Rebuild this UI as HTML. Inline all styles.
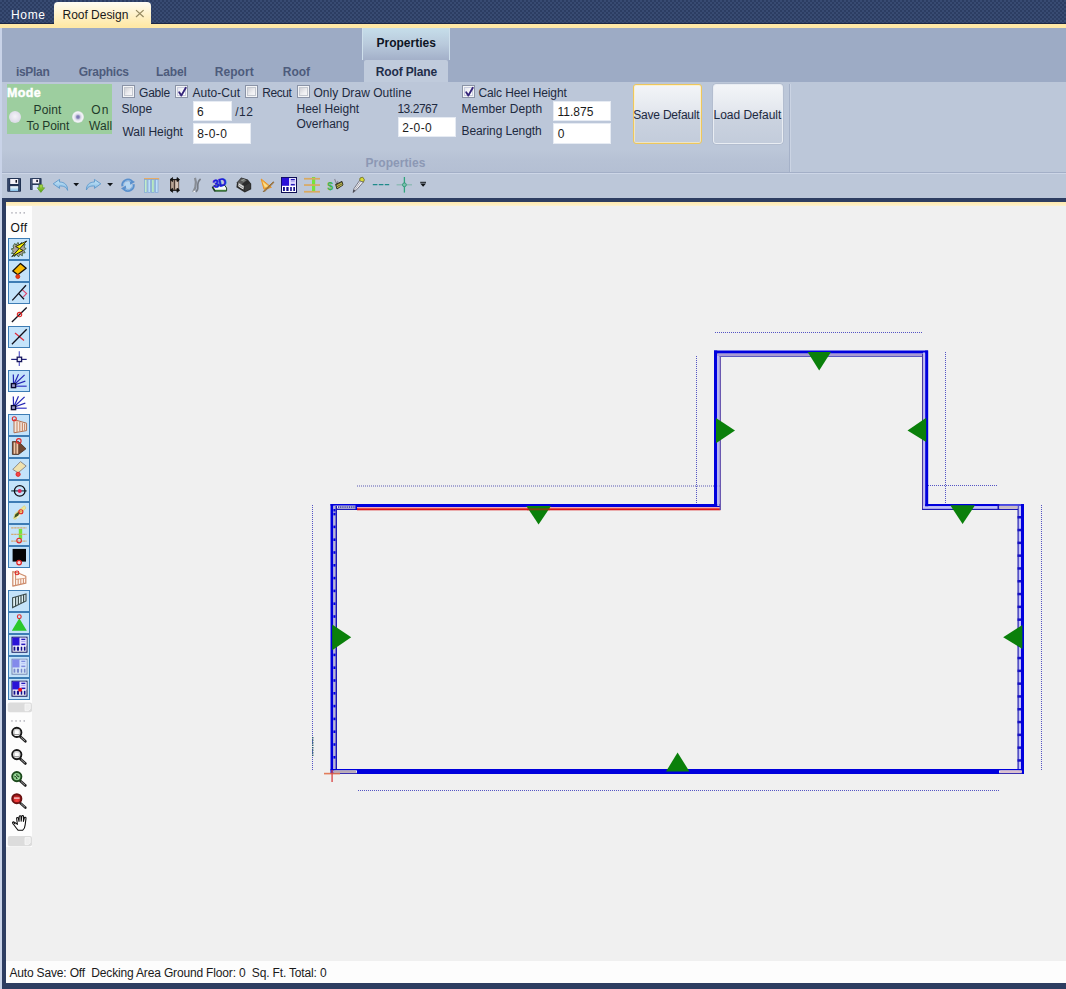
<!DOCTYPE html><html><head><meta charset="utf-8"><title>Roof Design</title><style>

*{margin:0;padding:0;box-sizing:border-box}
html,body{width:1066px;height:989px;overflow:hidden;background:#f0f0f0}
body{position:relative;font-family:"Liberation Sans",sans-serif}
.a{position:absolute}
.t{position:absolute;white-space:pre;line-height:1.149;font-family:"Liberation Sans",sans-serif}

</style></head><body>
<div class="a" style="left:0px;top:0px;width:1066px;height:24px;background:#2c3d62;background-image:radial-gradient(circle at 1px 1px,rgba(120,150,200,.16) 0.9px,transparent 1.3px),radial-gradient(circle at 3px 3px,rgba(120,150,200,.16) 0.9px,transparent 1.3px);background-size:4px 4px;border-bottom:1px solid #1d2744"></div>
<div class="a" style="left:0px;top:24px;width:1066px;height:4px;background:#ffe8a6;"></div>
<div class="a" style="left:54px;top:2px;width:97px;height:24px;background:linear-gradient(#fffdf4,#fff3cf 45%,#ffe8a6);border-radius:4px 4px 0 0"></div>
<div class="a" style="left:0px;top:28px;width:1066px;height:54px;background:#9dabc5;"></div>
<div class="a" style="left:0px;top:82px;width:1066px;height:90px;background:#bcc7d9;"></div>
<div class="a" style="left:2px;top:149px;width:787px;height:23px;background:linear-gradient(rgba(181,192,211,0),#b7c2d5 45%,#b4bfd3);"></div>
<div class="a" style="left:789px;top:84px;width:1px;height:88px;background:#a5b1c8;"></div>
<div class="a" style="left:790px;top:84px;width:1px;height:88px;background:#cbd4e4;"></div>
<div class="a" style="left:0px;top:172px;width:1066px;height:1px;background:#a3afc7;"></div>
<div class="a" style="left:0px;top:173px;width:1066px;height:1px;background:#cdd6e7;"></div>
<div class="a" style="left:0px;top:174px;width:1066px;height:24px;background:#bcc7d9;"></div>
<div class="a" style="left:0px;top:28px;width:2px;height:961px;background:#c9d3e8;"></div>
<div class="a" style="left:362px;top:28px;width:88px;height:32px;background:linear-gradient(#c6deea,#b9cadc 50%,#a3b0c9);border-left:1px solid #cfe0ec;border-right:1px solid #cfe0ec"></div>
<div class="a" style="left:364px;top:60px;width:84px;height:22px;background:#c0cbdc;border-radius:2px 2px 0 0"></div>
<div class="a" style="left:2px;top:198px;width:1064px;height:4px;background:#2d3d61;"></div>
<div class="a" style="left:2px;top:198px;width:4.2px;height:791px;background:#2d3d61;"></div>
<div class="a" style="left:2px;top:983px;width:1064px;height:6px;background:#2d3d61;"></div>
<div class="a" style="left:6.2px;top:202px;width:1059.8px;height:4px;background:linear-gradient(#ffe9ad,#fdf1cf);"></div>
<div class="a" style="left:6.2px;top:206px;width:25.8px;height:641px;background:#fdfdfd;"></div>
<div class="a" style="left:6.2px;top:961px;width:1059.8px;height:22px;background:#fdfdfd;"></div>
<div class="a" style="left:7.3px;top:83.7px;width:105px;height:50px;background:#9dce9f;"></div>
<style>
.cb{position:absolute;top:85px;width:13px;height:13px;border:1px solid #8a93a6;background:#f4f5f7;padding:1px}
.cb i{display:block;width:9px;height:9px;border:1px solid #c4c8d0;background:linear-gradient(135deg,#cfd0d6,#eeeef1 60%,#f7f7f9)}
.cb.on i{background:linear-gradient(135deg,#e4e6ee,#fbfbfd 60%,#ffffff);border-color:#c9cde0}
.cb svg{position:absolute;left:1px;top:0px}
.in{position:absolute;background:#fff;border:1px solid #e6ebf3}
.btn{position:absolute;top:84px;height:60px;border-radius:3px;background:linear-gradient(#f3f5f8,#e3e7ee 45%,#cbd3e0 55%,#c3ccdb)}
.rad{position:absolute;width:12px;height:12px;border-radius:50%}
</style>
<div class="cb" style="left:122px"><i></i></div>
<div class="cb on" style="left:175px"><i></i><svg width="11" height="12" viewBox="0 0 11 12"><path d="M2.2 6.2 L4.3 9.6 L8.8 1.8" fill="none" stroke="#35257a" stroke-width="1.9" stroke-linecap="round" stroke-linejoin="round"/></svg></div>
<div class="cb" style="left:245px"><i></i></div>
<div class="cb" style="left:297px"><i></i></div>
<div class="cb on" style="left:462px"><i></i><svg width="11" height="12" viewBox="0 0 11 12"><path d="M2.2 6.2 L4.3 9.6 L8.8 1.8" fill="none" stroke="#35257a" stroke-width="1.9" stroke-linecap="round" stroke-linejoin="round"/></svg></div>

<div class="in" style="left:193px;top:101px;width:38.5px;height:20px"></div>
<div class="in" style="left:193px;top:123px;width:58px;height:20.5px"></div>
<div class="in" style="left:398px;top:117px;width:58px;height:20px"></div>
<div class="in" style="left:553px;top:101px;width:58px;height:20px"></div>
<div class="in" style="left:553px;top:123px;width:58px;height:20.5px"></div>

<div class="btn" style="left:632.5px;width:69.5px;border:1px solid #eec75c;box-shadow:inset 0 0 0 1px rgba(255,240,190,.7)"></div>
<div class="btn" style="left:712.5px;width:70.5px;border:1px solid #e9edf3;box-shadow:0 0 0 0.5px #aab4c6"></div>

<div class="rad" style="left:9px;top:110.8px;background:radial-gradient(circle at 50% 45%,#f4f3f8 0,#e2e0ec 55%,#cfd6d8 100%)"></div>
<div class="rad" style="left:71.8px;top:110.8px;background:radial-gradient(circle at 50% 50%,#7474ae 0,#8482b8 1.3px,#cfcfe2 2.6px,#e6e6f0 3.6px,#f4f4f8 4.8px,#d4dfda 6px)"></div>

<svg class="a" style="left:0;top:0" width="1066" height="989" viewBox="0 0 1066 989" font-family="Liberation Sans, sans-serif">
<defs>
<linearGradient id="gsv" x1="0" y1="0" x2="0" y2="1"><stop offset="0" stop-color="#ffffff"/><stop offset="1" stop-color="#7fbde6"/></linearGradient>
<linearGradient id="gar" x1="0" y1="0" x2="0" y2="1"><stop offset="0" stop-color="#c8e8f8"/><stop offset="1" stop-color="#7fb4e0"/></linearGradient>
<linearGradient id="ggr" x1="0" y1="0" x2="0" y2="1"><stop offset="0" stop-color="#b8e050"/><stop offset="1" stop-color="#4c9a10"/></linearGradient>
<radialGradient id="gred" cx="0.5" cy="0.7" r="0.6"><stop offset="0" stop-color="#ff4040"/><stop offset="1" stop-color="#a01818"/></radialGradient>
<g id="grid"><rect x="0" y="0" width="16" height="16" fill="#0e0e54"/><rect x="1" y="1" width="14" height="14" fill="#ffffff"/><rect x="0.8" y="0.8" width="7.4" height="8" fill="#2a12d8"/><rect x="8.2" y="1" width="6.8" height="8" fill="#e4e0ff"/><rect x="9.8" y="2" width="4" height="1.3" fill="#2418b8"/><rect x="9.8" y="4.2" width="4" height="1" fill="#a8a0f0"/><rect x="9.8" y="6.9" width="4" height="1.5" fill="#2418b8"/><rect x="2" y="10" width="1.9" height="4" fill="#14108c"/><rect x="5.3" y="10" width="2.3" height="4" fill="#14108c"/><rect x="9.2" y="10" width="1.6" height="4" fill="#14108c"/><rect x="12.3" y="10" width="1.7" height="4" fill="#14108c"/></g>
<g id="fan" stroke="#2424b4" stroke-width="1.2" fill="none"><line x1="13.6" y1="385.2" x2="13.3" y2="374.5"/><line x1="13.6" y1="385.2" x2="18.5" y2="374.2"/><line x1="13.6" y1="385.2" x2="24.6" y2="374.9"/><line x1="13.6" y1="385.2" x2="25.3" y2="381.1"/><line x1="13.6" y1="386.2" x2="26.7" y2="386.2" stroke="#3434c4"/><rect x="11.4" y="383.6" width="4.2" height="4" fill="#9a9ac8" stroke="#0a0a30" stroke-width="1.4"/></g>
<g id="mag"><line x1="3.6" y1="4.4" x2="8.6" y2="8.9" stroke="#222" stroke-width="2.6" stroke-linecap="round"/><line x1="4.2" y1="4.9" x2="8.2" y2="8.5" stroke="#b8b8b8" stroke-width="0.8"/></g>
</defs>
<path d="M136 10.1 L143.6 17 M143.6 10.1 L136 17" stroke="#968a62" stroke-width="1.25" fill="none"/>
<g transform="translate(7.2,178)"><rect x="0" y="0" width="13.8" height="13.8" rx="0.8" fill="#1f3050"/><rect x="1" y="0.4" width="1.2" height="13" fill="#3a4d70"/><rect x="11.6" y="0.4" width="1.2" height="13" fill="#3a4d70"/><rect x="3" y="1" width="8" height="5" fill="#f4f2f8"/><rect x="8.3" y="2" width="1.5" height="2.7" fill="#15151f"/><rect x="3" y="8.2" width="8" height="4.8" fill="url(#gsv)"/></g>
<g transform="translate(30,178)"><rect x="0" y="0" width="11.6" height="12" rx="0.8" fill="#2a3b5c"/><rect x="0.8" y="0.4" width="1" height="11" fill="#4a5d80"/><rect x="2.6" y="1" width="6.6" height="4.4" fill="#f2eff8"/><rect x="6.3" y="1.8" width="1.6" height="2.2" fill="#15152a"/><rect x="2.6" y="7" width="6" height="5" fill="#d8e4fb"/><path d="M9.2 6.8 h3.4 v3 h2.1 l-3.8 4.6 l-3.8 -4.6 h2.1 z" fill="url(#ggr)" stroke="#5a9a20" stroke-width="0.6"/></g>
<path d="M53.2 183.8 L59.6 179.4 L59.4 182 C64.5 182 67.8 185 67.6 190.4 C66 186.8 63.6 185.8 59.4 186 L59.6 188.4 Z" fill="url(#gar)" stroke="#5d98cc" stroke-width="0.9" stroke-linejoin="round"/>
<path d="M73.3 183 h5.8 l-2.9 3.2 z" fill="#101418"/>
<path d="M100.8 183.8 L94.4 179.4 L94.6 182 C89.5 182 86.2 185 86.4 190 C88 186.6 90.4 185.8 94.6 186 L94.4 188.4 Z" fill="url(#gar)" stroke="#5d98cc" stroke-width="0.9" stroke-linejoin="round"/>
<path d="M107.2 183 h5.8 l-2.9 3.2 z" fill="#101418"/>
<g transform="translate(128,185.2)"><circle r="3.4" fill="#b4d6f2"/><path d="M-5.4 1 A5.5 5.5 0 0 1 3.6 -4.1" stroke="#5a90cc" stroke-width="2.5" fill="none"/><path d="M1.4 -6.8 L7 -3.2 L2.2 -0.4 Z" fill="#5a90cc"/><path d="M5.4 -1 A5.5 5.5 0 0 1 -3.6 4.1" stroke="#5a90cc" stroke-width="2.5" fill="none"/><path d="M-1.4 6.8 L-7 3.2 L-2.2 0.4 Z" fill="#5a90cc"/><path d="M-4.6 0.6 A4.7 4.7 0 0 1 2.8 -3.8 M4.6 -0.6 A4.7 4.7 0 0 1 -2.8 3.8" stroke="#9cc6ec" stroke-width="0.8" fill="none"/></g>
<g transform="translate(143.6,178)"><rect x="0.4" y="0.2" width="15.2" height="1.4" fill="#f2a448"/><rect x="0.8" y="1.6" width="2.6" height="13" fill="#c4ecc8" stroke="#7fa6d8" stroke-width="0.7"/><rect x="4.4" y="1.6" width="2.6" height="13" fill="#c0e0f8" stroke="#7fa6d8" stroke-width="0.7"/><rect x="8" y="1.6" width="2.6" height="13" fill="#b8e8c0" stroke="#7fa6d8" stroke-width="0.7"/><rect x="11.8" y="1.6" width="2.6" height="13" fill="#c0e0f8" stroke="#7fa6d8" stroke-width="0.7"/></g>
<g transform="translate(169,177.4)"><path d="M1.6 2.2 h8 v10.6 h-8 z" fill="#b9a596" stroke="#3a2a24" stroke-width="1"/><path d="M5.4 2.6 v9.8" stroke="#4a3a34" stroke-width="1.2"/><path d="M6.8 3.4 l2.6 0.6 v6.8 l-2.6 0.8 z" fill="#d4c4b8"/><path d="M1 2.2 l2.6 -2 v4 z M10.6 2.2 l-2.6 -2 v4 z M3.4 2.2 h5" fill="#111" stroke="#111" stroke-width="0.8"/><path d="M1 12.9 l2.6 -2 v4 z M10.6 12.9 l-2.6 -2 v4 z M3.4 12.9 h5" fill="#111" stroke="#111" stroke-width="0.8"/></g>
<g transform="translate(191.8,177.4)" fill="none" stroke="#878c94"><path d="M3.2 0.4 C4.2 3 4.6 6 3.6 9.5 C3 12 1.8 13.2 1.6 14.6" stroke-width="2.2"/><path d="M8.8 1.6 C6.4 3.4 5.8 6.6 6 9.4 C6.2 11.8 5.4 13.6 4 14.4" stroke-width="1.6" stroke="#767c86"/><circle cx="2.4" cy="14" r="0.8" fill="#fff" stroke="none"/></g>
<g transform="translate(211.8,177.4)"><path d="M0.8 9.4 l2.6 -1.6 h9.4 l2 2.8 v3 h-11.6 z" fill="#f6faf6" stroke="#1e3a22" stroke-width="1"/><path d="M2.8 12.4 h11.8 v1.6 h-11.8 z" fill="#3d7a3a"/><path d="M0.6 9.4 l2.6 4.6" stroke="#1e3a22" stroke-width="1.6"/><text x="2" y="10.6" font-size="11" font-weight="700" fill="#1a1ad8" stroke="#1a1ad8" stroke-width="0.5" transform="rotate(-12 2 10.6)" letter-spacing="-0.5">3D</text></g>
<g transform="translate(236,177)"><path d="M5.2 0.4 l6.6 2.2 l3.4 4.2 v5.4 l-6.4 3.4 l-8.4 -5.4 l0.6 -5 z" fill="#2b2b2b"/><path d="M5.4 1.2 l5.6 2 l-6 4.6 l-3.6 -2.4 z" fill="#585858"/><path d="M2.6 5.4 l5.6 3.6 l-0.6 3.6 l-5.8 -3.8 z" fill="#9a9a9a"/><path d="M2.8 7 l4.8 3 M2.4 9 l4.8 3" stroke="#f0f0f0" stroke-width="0.9"/><path d="M6.4 2.2 l3 1 M5.2 3.2 l3 1" stroke="#a8b0a8" stroke-width="0.8"/><path d="M8.8 9 l5.6 -3 v5.2 l-5.6 3.2 z" fill="#3a3a3a"/></g>
<g transform="translate(259.8,178.4)"><path d="M1.4 0.6 L4.2 10.8 L11.6 9 Z" fill="#f6b44a" stroke="#e89428" stroke-width="1"/><path d="M2.6 3 L5 8.6 L8.6 8 Z" fill="#f8e090"/><path d="M13.6 3.4 L4.6 11.8 L3.4 13.2 L5.4 12.6 L14 4.2 Z" fill="#e8a040" stroke="#7a5a30" stroke-width="0.8"/></g>
<use href="#grid" x="281" y="177"/>
<g transform="translate(304,177)"><rect x="8" y="0" width="3.2" height="14.8" fill="#74e43c"/><rect x="0" y="0.9" width="16" height="1.7" fill="#d9a960"/><rect x="0" y="7.2" width="16" height="1.7" fill="#d9a960"/><rect x="0" y="13.9" width="16" height="1.7" fill="#d9a960"/></g>
<g transform="translate(326.6,178)"><text x="0.6" y="11.8" font-size="10.5" font-weight="700" fill="#3fb24c">$</text><path d="M8 1 l2 5 l1.4 -3" stroke="#8a8a9a" stroke-width="1.1" fill="none"/><path d="M9 6.4 l6.4 -3 l1 3.6 l-6 4 z" fill="#5a5a28" stroke="#1e1e10" stroke-width="0.8"/><path d="M10 7.8 l5.4 -2.8 M10.4 9.6 l5.4 -3" stroke="#d8d060" stroke-width="0.9"/></g>
<g transform="translate(351.8,177)"><path d="M8.2 1 l2.8 -0.8 l1.6 2.6 l-1 2.4 l-3.8 -1.2 z" fill="#d8da34" stroke="#6a6a20" stroke-width="0.8"/><path d="M7.6 3.8 l3.8 1.4 l-6.6 7.6 l-3.4 2.8 l0.8 -4 z" fill="#f4f4f6" stroke="#6a6a78" stroke-width="0.9"/><path d="M2 12.6 l-1.2 3 l2.6 -2" fill="#3a3a44"/><path d="M8.6 5 l-5.6 8" stroke="#9a9aa8" stroke-width="0.8"/></g>
<path d="M372.8 184.6 h4.6 M378.8 184.6 h4.6 M384.8 184.6 h4.4" stroke="#1f8a8a" stroke-width="1.4"/>
<g><line x1="396.6" y1="184.8" x2="412" y2="184.8" stroke="#86b8b0" stroke-width="1.2"/><line x1="404.4" y1="177" x2="404.4" y2="192.6" stroke="#2fa47c" stroke-width="1.3"/><circle cx="404.4" cy="184.8" r="1.9" fill="#7fc4b0" stroke="#2f9478" stroke-width="0.9"/></g>
<rect x="420.2" y="181.8" width="5.8" height="1" fill="#101418"/><path d="M420.2 183.6 h5.8 l-2.9 3.2 z" fill="#101418"/>
<rect x="11.200000000000001" y="212.10000000000002" width="1.5" height="1.5" fill="#b4b4bc"/>
<rect x="15.3" y="212.10000000000002" width="1.5" height="1.5" fill="#b4b4bc"/>
<rect x="19.5" y="212.10000000000002" width="1.5" height="1.5" fill="#b4b4bc"/>
<rect x="23.5" y="212.10000000000002" width="1.5" height="1.5" fill="#b4b4bc"/>
<rect x="11.200000000000001" y="720.1999999999999" width="1.5" height="1.5" fill="#b4b4bc"/>
<rect x="15.3" y="720.1999999999999" width="1.5" height="1.5" fill="#b4b4bc"/>
<rect x="19.5" y="720.1999999999999" width="1.5" height="1.5" fill="#b4b4bc"/>
<rect x="23.5" y="720.1999999999999" width="1.5" height="1.5" fill="#b4b4bc"/>
<rect x="8.5" y="238.5" width="21" height="21" fill="#c4e3fa" stroke="#3d7cb4" stroke-width="1"/>
<rect x="8.5" y="260.5" width="21" height="21" fill="#c4e3fa" stroke="#3d7cb4" stroke-width="1"/>
<rect x="8.5" y="282.5" width="21" height="21" fill="#c4e3fa" stroke="#3d7cb4" stroke-width="1"/>
<rect x="8.5" y="326.5" width="21" height="21" fill="#c4e3fa" stroke="#3d7cb4" stroke-width="1"/>
<rect x="8.5" y="370.5" width="21" height="21" fill="#c4e3fa" stroke="#3d7cb4" stroke-width="1"/>
<rect x="8.5" y="414.5" width="21" height="21" fill="#c4e3fa" stroke="#3d7cb4" stroke-width="1"/>
<rect x="8.5" y="436.5" width="21" height="21" fill="#c4e3fa" stroke="#3d7cb4" stroke-width="1"/>
<rect x="8.5" y="458.5" width="21" height="21" fill="#c4e3fa" stroke="#3d7cb4" stroke-width="1"/>
<rect x="8.5" y="480.5" width="21" height="21" fill="#c4e3fa" stroke="#3d7cb4" stroke-width="1"/>
<rect x="8.5" y="502.5" width="21" height="21" fill="#c4e3fa" stroke="#3d7cb4" stroke-width="1"/>
<rect x="8.5" y="524.5" width="21" height="21" fill="#c4e3fa" stroke="#3d7cb4" stroke-width="1"/>
<rect x="8.5" y="546.5" width="21" height="21" fill="#c4e3fa" stroke="#3d7cb4" stroke-width="1"/>
<rect x="8.5" y="590.5" width="21" height="21" fill="#c4e3fa" stroke="#3d7cb4" stroke-width="1"/>
<rect x="8.5" y="612.5" width="21" height="21" fill="#c4e3fa" stroke="#3d7cb4" stroke-width="1"/>
<rect x="8.5" y="634.5" width="21" height="21" fill="#c4e3fa" stroke="#3d7cb4" stroke-width="1"/>
<rect x="8.5" y="656.5" width="21" height="21" fill="#c4e3fa" stroke="#3d7cb4" stroke-width="1"/>
<rect x="8.5" y="678.5" width="21" height="21" fill="#c4e3fa" stroke="#3d7cb4" stroke-width="1"/>
<g><path d="M13 246 l1.8 -2.6 l1.2 1.8 l2 -2.8 l1.2 2.4 l2.6 -2.4 l0.4 2.8 l3 -0.8 l-1.2 3 l2.2 1.2 l-2.4 1.8 l1.4 2.4 l-3 0.2 l0.2 2.8 l-2.6 -1.6 l-1.2 2.8 l-1.8 -2.4 l-2.6 2 l0 -3 l-2.8 -0.2 l2 -2.4 l-2.2 -2 l2.6 -0.8 z" fill="#ada49a" stroke="#34562c" stroke-width="0.8"/><path d="M26.7 241 L15.6 246.6 L19.2 248.5 L11.8 256.6 L23.2 250.5 L19.8 248.7 Z" fill="#f8f200" stroke="#15150c" stroke-width="0.9" stroke-linejoin="round"/></g>
<path d="M20.5 263.4 L26.2 268.2 L17.8 274.8 L12.8 271 Z" fill="#f8b900" stroke="#141008" stroke-width="1.3" stroke-linejoin="round"/><circle cx="17.8" cy="276.6" r="2" fill="#e83a10" stroke="#c82a10" stroke-width="0.8"/>
<path d="M22.2 289.7 L26.6 293.6 L23.3 296.9" fill="none" stroke="#e0406a" stroke-width="1.1"/><line x1="26" y1="285.2" x2="12.3" y2="300.4" stroke="#10101c" stroke-width="1.3"/><line x1="18.8" y1="293.6" x2="24" y2="299.3" stroke="#10101c" stroke-width="1.3"/>
<line x1="26.7" y1="307.5" x2="11.9" y2="322" stroke="#10101c" stroke-width="1.3"/><circle cx="19.5" cy="314.6" r="2.2" fill="none" stroke="#e02828" stroke-width="1.1"/>
<line x1="15" y1="333" x2="24" y2="340.5" stroke="#e02838" stroke-width="1.2"/><line x1="26.7" y1="329.2" x2="11.9" y2="344.3" stroke="#10101c" stroke-width="1.3"/>
<line x1="19.3" y1="351.2" x2="19.3" y2="366" stroke="#5a5ac8" stroke-width="1.2"/><line x1="11.2" y1="359.4" x2="26.7" y2="359.4" stroke="#22227c" stroke-width="1.2"/><rect x="17.2" y="357.2" width="4.4" height="4.4" fill="#e8e8f8" stroke="#16165a" stroke-width="1.3"/>
<use href="#fan"/><use href="#fan" y="22"/>
<g><path d="M14 419.6 L26.6 423.2 L26.6 430.6 L14 432.8 Z" fill="#f4e6dc" stroke="#b07050" stroke-width="1"/><line x1="17" y1="421.27" x2="17" y2="431.89" stroke="#c88a68" stroke-width="1.1"/><line x1="19.8" y1="422.082" x2="19.8" y2="431.414" stroke="#c88a68" stroke-width="1.1"/><line x1="22.4" y1="422.83599999999996" x2="22.4" y2="430.972" stroke="#c88a68" stroke-width="1.1"/><line x1="24.6" y1="423.474" x2="24.6" y2="430.59799999999996" stroke="#c88a68" stroke-width="1.1"/><circle cx="14.3" cy="418.7" r="2" fill="none" stroke="#e02828" stroke-width="1.1"/></g>
<g><path d="M12.4 441.6 h6.2 l7.4 7.2 l-7.4 5.6 h-6.2 z" fill="#6f4630" stroke="#4a2e20" stroke-width="0.8"/><rect x="13.6" y="442.4" width="1.8" height="11.4" fill="#f0c8a8"/><rect x="16.4" y="442.4" width="1.8" height="11.4" fill="#f0c8a8"/><circle cx="18.8" cy="440.9" r="2.3" fill="none" stroke="#e02828" stroke-width="1.1"/></g>
<path d="M20.5 461.6 L26.2 466 L18.1 472.8 L12.8 469.4 Z" fill="#f0e2ae" stroke="#8c8c8c" stroke-width="1" stroke-linejoin="round"/><circle cx="18.1" cy="474.3" r="2.1" fill="#f04848" stroke="#e02020" stroke-width="0.9"/>
<line x1="11.2" y1="490.9" x2="26.7" y2="490.9" stroke="#1e3c44" stroke-width="1.2"/><circle cx="19.7" cy="490.9" r="5.3" fill="none" stroke="#0c0c14" stroke-width="1.3"/><circle cx="19.7" cy="490.9" r="2" fill="#e0245a"/>
<g><path d="M24.4 505.6 L26 508 L15.4 519.4 L13.4 518.6 L15 513.6 Z" fill="#ece498" stroke="#d8d070" stroke-width="0.6"/><path d="M19.4 511 L15.2 514.6 L14.2 518 L18.6 515.6 Z" fill="#3e5422"/><path d="M22 513 L17 518" stroke="#f4f0c8" stroke-width="1.2"/><circle cx="20.9" cy="511.7" r="2" fill="none" stroke="#e02828" stroke-width="1.1"/><circle cx="20.9" cy="511.7" r="0.9" fill="#e8a040"/></g>
<g><rect x="18.8" y="528.9" width="3.4" height="10" fill="#74e43c"/><line x1="11.2" y1="527.9" x2="26.7" y2="527.9" stroke="#d2aa72" stroke-width="1.3" stroke-dasharray="2.4 0.6"/><line x1="11.2" y1="534.4" x2="26.7" y2="534.4" stroke="#d2aa72" stroke-width="1.3" stroke-dasharray="2.4 0.6"/><line x1="11.2" y1="541.2" x2="26.7" y2="541.2" stroke="#d2aa72" stroke-width="1.3" stroke-dasharray="2.4 0.6"/><circle cx="19.1" cy="540.6" r="2.3" fill="none" stroke="#e02828" stroke-width="1.1"/></g>
<rect x="12.6" y="548.9" width="13.4" height="12.7" fill="#050505"/><circle cx="19.1" cy="562.6" r="2.3" fill="#f6d8d8" stroke="#e02020" stroke-width="1.2"/>
<g><path d="M12.8 571.6 L17.6 572.8 L25.8 576.2 L25.8 583.2 L12.8 586.2 Z" fill="#fff8f2" stroke="#cc8a6a" stroke-width="1.2" stroke-linejoin="round"/><path d="M15.6 572.6 V585.4" stroke="#cc8a6a" stroke-width="1"/><path d="M15.6 579.4 L25.8 578.2" stroke="#d89a7a" stroke-width="0.9"/><line x1="18.2" y1="578.94" x2="18.2" y2="584.828" stroke="#d09070" stroke-width="1.1"/><line x1="20.8" y1="578.6800000000001" x2="20.8" y2="584.256" stroke="#d09070" stroke-width="1.1"/><line x1="23.4" y1="578.4200000000001" x2="23.4" y2="583.684" stroke="#d09070" stroke-width="1.1"/><circle cx="17" cy="572.9" r="1.9" fill="none" stroke="#e02828" stroke-width="1.1"/></g>
<g><path d="M12.6 597.8 L26 594 L26 601 L12.6 607.6 Z" fill="#dff0f4" stroke="#3c4c4c" stroke-width="1.1"/><line x1="15.6" y1="596.9599999999999" x2="15.6" y2="606.13" stroke="#3c4c4c" stroke-width="1.2"/><line x1="18.4" y1="596.1759999999999" x2="18.4" y2="604.758" stroke="#3c4c4c" stroke-width="1.2"/><line x1="21" y1="595.448" x2="21" y2="603.484" stroke="#3c4c4c" stroke-width="1.2"/><line x1="23.6" y1="594.7199999999999" x2="23.6" y2="602.21" stroke="#3c4c4c" stroke-width="1.2"/></g>
<path d="M19.3 618.2 L26.8 630.8 L11.8 630.8 Z" fill="#2ac82a"/><circle cx="19.3" cy="616.7" r="1.9" fill="none" stroke="#e02828" stroke-width="1.1"/>
<use href="#grid" x="11.5" y="636.7"/>
<use href="#grid" x="11.5" y="658.7" opacity="0.42"/>
<use href="#grid" x="11.5" y="680.7"/><circle cx="20.1" cy="689.7" r="2" fill="#ee1020"/>
<rect x="7.8" y="702.5" width="24.2" height="9.8" rx="2" fill="#dcdcdc"/><path d="M25 704.1 v6.6000000000000005 h3.4 l1.8 -1.8 v-4.800000000000001 z" fill="#eeeeee" stroke="#f8f8f8" stroke-width="0.8"/>
<rect x="7.8" y="836" width="24.2" height="10.2" rx="2" fill="#dcdcdc"/><path d="M25 837.6 v6.999999999999999 h3.4 l1.8 -1.8 v-5.199999999999999 z" fill="#eeeeee" stroke="#f8f8f8" stroke-width="0.8"/>
<g transform="translate(16.8,732.4)"><use href="#mag"/><circle r="4.6" fill="#fafafa" stroke="#161616" stroke-width="1.9"/><rect x="-2.6" y="-2.6" width="5" height="4.6" fill="#fff" stroke="#b0b0b0" stroke-width="0.7"/><path d="M-3 2.2 h6" stroke="#8a8a8a" stroke-width="0.9"/></g>
<g transform="translate(16.8,754.6)"><use href="#mag"/><circle r="4.6" fill="#fafafa" stroke="#161616" stroke-width="1.9"/><rect x="-2.6" y="-2.6" width="5" height="4.6" fill="#fff" stroke="#b0b0b0" stroke-width="0.7"/><path d="M-3 2.2 h6" stroke="#8a8a8a" stroke-width="0.9"/></g>
<g transform="translate(16.8,776.6)"><use href="#mag"/><circle r="4.6" fill="#8fd08f" stroke="#1c4a1c" stroke-width="1.9"/><path d="M-2.4 0 h4.8 M0 -2.4 v4.8" stroke="#2a5a2a" stroke-width="1.5"/><path d="M-1.8 -1.8 l3.6 3.6" stroke="#c8f0c8" stroke-width="0.9"/></g>
<g transform="translate(16.8,798.7)"><use href="#mag"/><circle r="4.6" fill="url(#gred)" stroke="#6a1010" stroke-width="1.9"/><path d="M-2.8 -0.6 h5.6" stroke="#f8c8c8" stroke-width="1.4"/></g>
<g transform="translate(12,815)"><path d="M5.4 9.4 L4.6 3.4 C4.6 2.2 6.2 2.2 6.4 3.4 L7 6.4 L7.2 1.6 C7.4 0.4 9 0.4 9 1.6 L9.2 6.2 L9.8 1.4 C10 0.2 11.6 0.4 11.6 1.6 L11.4 6.4 L12.4 2.8 C12.8 1.8 14.2 2.2 14 3.4 L13.2 9.6 C13 12.4 11.8 14.4 10.8 15.2 H6 C4.6 13.6 3 11.4 0.6 8.2 C0.2 7.2 1.4 6.4 2.4 7.2 Z" fill="#ffffff" stroke="#0c0c0c" stroke-width="1.05" stroke-linejoin="round"/><path d="M0.8 7.4 l2.4 2.4 l0 -2.6 z" fill="#0c0c0c"/></g>
</svg>
<svg class="a" style="left:0;top:0" width="1066" height="989" viewBox="0 0 1066 989">
<line x1="312.5" y1="505" x2="312.5" y2="770" stroke="#5454c4" stroke-width="1" stroke-dasharray="1 1" fill="none" shape-rendering="crispEdges"/>
<line x1="1041.5" y1="505" x2="1041.5" y2="770" stroke="#5454c4" stroke-width="1" stroke-dasharray="1 1" fill="none" shape-rendering="crispEdges"/>
<line x1="358" y1="790.5" x2="999" y2="790.5" stroke="#5454c4" stroke-width="1" stroke-dasharray="1 1" fill="none" shape-rendering="crispEdges"/>
<line x1="357" y1="486" x2="720" y2="486" stroke="#5a5ab4" stroke-width="1.2" stroke-dasharray="1 1" fill="none"/>
<line x1="696.5" y1="356" x2="696.5" y2="504" stroke="#5454c4" stroke-width="1" stroke-dasharray="1 1" fill="none" shape-rendering="crispEdges"/>
<line x1="715" y1="332.5" x2="923" y2="332.5" stroke="#5454c4" stroke-width="1" stroke-dasharray="1 1" fill="none" shape-rendering="crispEdges"/>
<line x1="945.5" y1="352" x2="945.5" y2="504" stroke="#5454c4" stroke-width="1" stroke-dasharray="1 1" fill="none" shape-rendering="crispEdges"/>
<line x1="928" y1="485.5" x2="998" y2="485.5" stroke="#5454c4" stroke-width="1" stroke-dasharray="1 1" fill="none" shape-rendering="crispEdges"/>
<line x1="312.8" y1="737" x2="312.8" y2="756" stroke="#1d5563" stroke-width="1.2" stroke-dasharray="1.5 1" />
<rect x="330.50" y="504.00" width="2.90" height="270.00" fill="#0000dd" />
<rect x="333.40" y="505.50" width="2.10" height="266.50" fill="#b9b6d6" />
<rect x="335.50" y="506.00" width="1.50" height="264.00" fill="#1c18b4" />
<rect x="333.40" y="509.00" width="2.10" height="2.50" fill="#0000dd" />
<rect x="333.40" y="512.80" width="2.10" height="2.60" fill="#0000dd" />
<rect x="333.40" y="525.60" width="2.10" height="2.60" fill="#0000dd" />
<rect x="333.40" y="538.40" width="2.10" height="2.60" fill="#0000dd" />
<rect x="333.40" y="551.20" width="2.10" height="2.60" fill="#0000dd" />
<rect x="333.40" y="564.00" width="2.10" height="2.60" fill="#0000dd" />
<rect x="333.40" y="576.80" width="2.10" height="2.60" fill="#0000dd" />
<rect x="333.40" y="589.60" width="2.10" height="2.60" fill="#0000dd" />
<rect x="333.40" y="602.40" width="2.10" height="2.60" fill="#0000dd" />
<rect x="333.40" y="615.20" width="2.10" height="2.60" fill="#0000dd" />
<rect x="333.40" y="628.00" width="2.10" height="2.60" fill="#0000dd" />
<rect x="333.40" y="640.80" width="2.10" height="2.60" fill="#0000dd" />
<rect x="333.40" y="653.60" width="2.10" height="2.60" fill="#0000dd" />
<rect x="333.40" y="666.40" width="2.10" height="2.60" fill="#0000dd" />
<rect x="333.40" y="679.20" width="2.10" height="2.60" fill="#0000dd" />
<rect x="333.40" y="692.00" width="2.10" height="2.60" fill="#0000dd" />
<rect x="333.40" y="704.80" width="2.10" height="2.60" fill="#0000dd" />
<rect x="333.40" y="717.60" width="2.10" height="2.60" fill="#0000dd" />
<rect x="333.40" y="730.40" width="2.10" height="2.60" fill="#0000dd" />
<rect x="333.40" y="743.20" width="2.10" height="2.60" fill="#0000dd" />
<rect x="333.40" y="756.00" width="2.10" height="2.60" fill="#0000dd" />
<rect x="1021.00" y="504.00" width="3.00" height="270.00" fill="#0000dd" />
<rect x="1018.70" y="506.00" width="2.30" height="266.00" fill="#c2c2f8" />
<rect x="1017.50" y="506.00" width="1.20" height="264.00" fill="#1c18b4" />
<rect x="1017.50" y="516.00" width="3.50" height="2.50" fill="#1512c4" />
<rect x="1017.50" y="528.80" width="3.50" height="2.50" fill="#1512c4" />
<rect x="1017.50" y="541.60" width="3.50" height="2.50" fill="#1512c4" />
<rect x="1017.50" y="554.40" width="3.50" height="2.50" fill="#1512c4" />
<rect x="1017.50" y="567.20" width="3.50" height="2.50" fill="#1512c4" />
<rect x="1017.50" y="580.00" width="3.50" height="2.50" fill="#1512c4" />
<rect x="1017.50" y="592.80" width="3.50" height="2.50" fill="#1512c4" />
<rect x="1017.50" y="605.60" width="3.50" height="2.50" fill="#1512c4" />
<rect x="1017.50" y="618.40" width="3.50" height="2.50" fill="#1512c4" />
<rect x="1017.50" y="631.20" width="3.50" height="2.50" fill="#1512c4" />
<rect x="1017.50" y="644.00" width="3.50" height="2.50" fill="#1512c4" />
<rect x="1017.50" y="656.80" width="3.50" height="2.50" fill="#1512c4" />
<rect x="1017.50" y="669.60" width="3.50" height="2.50" fill="#1512c4" />
<rect x="1017.50" y="682.40" width="3.50" height="2.50" fill="#1512c4" />
<rect x="1017.50" y="695.20" width="3.50" height="2.50" fill="#1512c4" />
<rect x="1017.50" y="708.00" width="3.50" height="2.50" fill="#1512c4" />
<rect x="1017.50" y="720.80" width="3.50" height="2.50" fill="#1512c4" />
<rect x="1017.50" y="733.60" width="3.50" height="2.50" fill="#1512c4" />
<rect x="1017.50" y="746.40" width="3.50" height="2.50" fill="#1512c4" />
<rect x="1017.50" y="759.20" width="3.50" height="2.50" fill="#1512c4" />
<rect x="330.50" y="504.00" width="26.50" height="1.60" fill="#0000dd" />
<rect x="337.00" y="508.60" width="20.00" height="1.40" fill="#1c18b4" />
<rect x="338.00" y="505.90" width="18.00" height="2.50" fill="#aeb0cc" />
<line x1="338" y1="507.1" x2="356" y2="507.1" stroke="#4a48b0" stroke-width="1.6" stroke-dasharray="1 1.2"/>
<rect x="355.50" y="504.00" width="2.00" height="6.00" fill="#0000dd" />
<rect x="357.00" y="504.00" width="363.50" height="3.00" fill="#0000dd" />
<rect x="357.00" y="507.00" width="363.50" height="1.30" fill="#f4a8b4" />
<rect x="357.00" y="508.30" width="363.50" height="2.00" fill="#dc1414" />
<rect x="714.00" y="350.50" width="3.20" height="156.50" fill="#0000dd" />
<rect x="717.20" y="354.00" width="2.40" height="152.00" fill="#b8b4f0" />
<rect x="719.60" y="356.00" width="1.40" height="154.00" fill="#6a58b0" />
<rect x="714.00" y="350.50" width="214.00" height="3.10" fill="#0000dd" />
<rect x="717.20" y="353.60" width="205.30" height="2.40" fill="#a89ad2" />
<rect x="719.60" y="356.00" width="202.90" height="1.00" fill="#5a58c0" />
<rect x="925.10" y="350.50" width="3.10" height="156.50" fill="#0000dd" />
<rect x="923.10" y="352.50" width="2.00" height="153.50" fill="#c4bef6" />
<rect x="922.00" y="354.00" width="1.10" height="156.00" fill="#4a3aa0" />
<rect x="925.10" y="504.00" width="73.40" height="2.30" fill="#0000dd" />
<rect x="923.10" y="506.30" width="74.90" height="2.50" fill="#c2c2f8" />
<rect x="922.00" y="508.80" width="96.00" height="1.20" fill="#1c18b4" />
<rect x="997.50" y="504.00" width="1.80" height="6.00" fill="#1c18b4" />
<rect x="998.50" y="504.30" width="25.50" height="1.40" fill="#0000dd" />
<rect x="999.30" y="505.90" width="18.20" height="2.80" fill="#c9bcc4" />
<rect x="357.00" y="769.00" width="642.00" height="5.00" fill="#0000dd" />
<rect x="330.50" y="769.00" width="26.50" height="1.40" fill="#0000dd" />
<rect x="330.50" y="772.80" width="26.50" height="1.20" fill="#3a30b0" />
<rect x="334.00" y="770.40" width="22.00" height="2.40" fill="#b8aab4" />
<rect x="999.00" y="769.00" width="25.00" height="1.40" fill="#0000dd" />
<rect x="999.00" y="772.80" width="25.00" height="1.20" fill="#3a30b0" />
<rect x="1000.20" y="770.40" width="21.80" height="2.40" fill="#dcc0cc" />
<rect x="1022.00" y="769.00" width="2.00" height="5.00" fill="#0000dd" />
<polygon points="807.6,352 831,352 819.2,370.5" fill="#0a800a" />
<polygon points="716,418 716,443.2 735,430.6" fill="#0a800a" />
<polygon points="926.2,417.7 926.2,441.9 907.5,430.4" fill="#0a800a" />
<polygon points="526.3,506 551,506 538.6,524.6" fill="#0a800a" />
<polygon points="950.3,505.3 975,505.3 962.6,524" fill="#0a800a" />
<polygon points="332.2,624.4 332.2,650.2 351.2,637.2" fill="#0a800a" />
<polygon points="1022.4,625 1022.4,649 1003.2,637.2" fill="#0a800a" />
<polygon points="666,771.4 689.4,771.4 677.6,752.6" fill="#0a800a" />
<rect x="527.00" y="508.30" width="23.00" height="2.00" fill="#c81414" opacity="0.55"/>
<rect x="324.00" y="772.80" width="16.00" height="1.60" fill="#e0704a" opacity="0.9"/>
<rect x="331.30" y="770.00" width="1.60" height="12.00" fill="#d84848" opacity="0.85"/>
</svg>
<span id="home" class="t" style="left:11.00px;top:8.74px;font-size:12px;font-weight:400;color:#ffffff;letter-spacing:0.667px">Home</span>
<span id="roofdesign" class="t" style="left:62.50px;top:8.74px;font-size:12px;font-weight:400;color:#1a1a1a;letter-spacing:-0.020px">Roof Design</span>
<span id="t_isplan" class="t" style="left:15.90px;top:65.74px;font-size:12px;font-weight:700;color:#4d5b7c;letter-spacing:-0.280px">isPlan</span>
<span id="t_graphics" class="t" style="left:78.80px;top:65.74px;font-size:12px;font-weight:700;color:#4d5b7c;letter-spacing:-0.257px">Graphics</span>
<span id="t_label" class="t" style="left:156.00px;top:65.74px;font-size:12px;font-weight:700;color:#4d5b7c;letter-spacing:-0.125px">Label</span>
<span id="t_report" class="t" style="left:214.80px;top:65.74px;font-size:12px;font-weight:700;color:#4d5b7c;letter-spacing:0.040px">Report</span>
<span id="t_roof" class="t" style="left:282.80px;top:65.74px;font-size:12px;font-weight:700;color:#4d5b7c;letter-spacing:-0.033px">Roof</span>
<span id="t_roofplane" class="t" style="left:375.80px;top:66.14px;font-size:12px;font-weight:700;color:#1f2d4a;letter-spacing:-0.144px">Roof Plane</span>
<span id="t_props" class="t" style="left:376.50px;top:36.94px;font-size:12px;font-weight:700;color:#0d1424;letter-spacing:0.000px">Properties</span>
<span id="mode" class="t" style="left:6.90px;top:86.29px;font-size:12.5px;font-weight:700;color:#ffffff;letter-spacing:0.367px;-webkit-text-stroke:0.45px #fff">Mode</span>
<span id="point" class="t" style="left:33.50px;top:104.24px;font-size:12px;font-weight:400;color:#1f3a2a;letter-spacing:0.125px">Point</span>
<span id="topoint" class="t" style="left:26.60px;top:119.74px;font-size:12px;font-weight:400;color:#1f3a2a;letter-spacing:-0.100px">To Point</span>
<span id="on" class="t" style="left:91.30px;top:104.24px;font-size:12px;font-weight:400;color:#1f3a2a;letter-spacing:1.000px">On</span>
<span id="wall" class="t" style="left:89.00px;top:119.74px;font-size:12px;font-weight:400;color:#1f3a2a;letter-spacing:0.067px">Wall</span>
<span id="gable" class="t" style="left:139.00px;top:86.84px;font-size:12px;font-weight:400;color:#1e2a40;letter-spacing:-0.200px">Gable</span>
<span id="autocut" class="t" style="left:192.40px;top:86.84px;font-size:12px;font-weight:400;color:#1e2a40;letter-spacing:0.057px">Auto-Cut</span>
<span id="recut" class="t" style="left:262.30px;top:86.84px;font-size:12px;font-weight:400;color:#1e2a40;letter-spacing:-0.450px">Recut</span>
<span id="onlydraw" class="t" style="left:313.40px;top:86.84px;font-size:12px;font-weight:400;color:#1e2a40;letter-spacing:0.050px">Only Draw Outline</span>
<span id="calc" class="t" style="left:478.40px;top:86.84px;font-size:12px;font-weight:400;color:#1e2a40;letter-spacing:-0.107px">Calc Heel Height</span>
<span id="slope" class="t" style="left:121.50px;top:102.94px;font-size:12px;font-weight:400;color:#1e2a40;letter-spacing:-0.025px">Slope</span>
<span id="v6" class="t" style="left:197.00px;top:106.44px;font-size:12px;font-weight:400;color:#1a1a1a;letter-spacing:0.000px">6</span>
<span id="s12" class="t" style="left:235.30px;top:106.44px;font-size:12px;font-weight:400;color:#1e2a40;letter-spacing:0.450px">/12</span>
<span id="wallh" class="t" style="left:122.50px;top:125.54px;font-size:12px;font-weight:400;color:#1e2a40;letter-spacing:-0.050px">Wall Height</span>
<span id="v800" class="t" style="left:197.20px;top:127.94px;font-size:12px;font-weight:400;color:#1a1a1a;letter-spacing:0.400px">8-0-0</span>
<span id="heelh" class="t" style="left:296.50px;top:103.04px;font-size:12px;font-weight:400;color:#1e2a40;letter-spacing:0.000px">Heel Height</span>
<span id="v13" class="t" style="left:397.40px;top:103.04px;font-size:12px;font-weight:400;color:#1e2a40;letter-spacing:-0.467px">13.2767</span>
<span id="overhang" class="t" style="left:296.50px;top:118.44px;font-size:12px;font-weight:400;color:#1e2a40;letter-spacing:0.000px">Overhang</span>
<span id="v200" class="t" style="left:402.20px;top:121.64px;font-size:12px;font-weight:400;color:#1a1a1a;letter-spacing:0.375px">2-0-0</span>
<span id="memd" class="t" style="left:461.50px;top:103.04px;font-size:12px;font-weight:400;color:#1e2a40;letter-spacing:0.118px">Member Depth</span>
<span id="v11" class="t" style="left:557.40px;top:105.64px;font-size:12px;font-weight:400;color:#1a1a1a;letter-spacing:0.040px">11.875</span>
<span id="bearl" class="t" style="left:461.50px;top:125.44px;font-size:12px;font-weight:400;color:#1e2a40;letter-spacing:-0.092px">Bearing Length</span>
<span id="v0" class="t" style="left:557.80px;top:127.54px;font-size:12px;font-weight:400;color:#1a1a1a;letter-spacing:0.000px">0</span>
<span id="saved" class="t" style="left:633.30px;top:108.94px;font-size:12px;font-weight:400;color:#1e2a40;letter-spacing:-0.218px">Save Default</span>
<span id="loadd" class="t" style="left:713.50px;top:108.94px;font-size:12px;font-weight:400;color:#1e2a40;letter-spacing:-0.018px">Load Default</span>
<span id="g_props" class="t" style="left:365.50px;top:156.74px;font-size:12px;font-weight:700;color:#8c98b4;letter-spacing:0.056px">Properties</span>
<span id="off" class="t" style="left:10.50px;top:222.14px;font-size:12px;font-weight:400;color:#111111;letter-spacing:0.350px">Off</span>
<span id="status" class="t" style="left:9.40px;top:967.44px;font-size:12px;font-weight:400;color:#1a1a1a;letter-spacing:-0.162px">Auto Save: Off  Decking Area Ground Floor: 0  Sq. Ft. Total: 0</span>
</body></html>
